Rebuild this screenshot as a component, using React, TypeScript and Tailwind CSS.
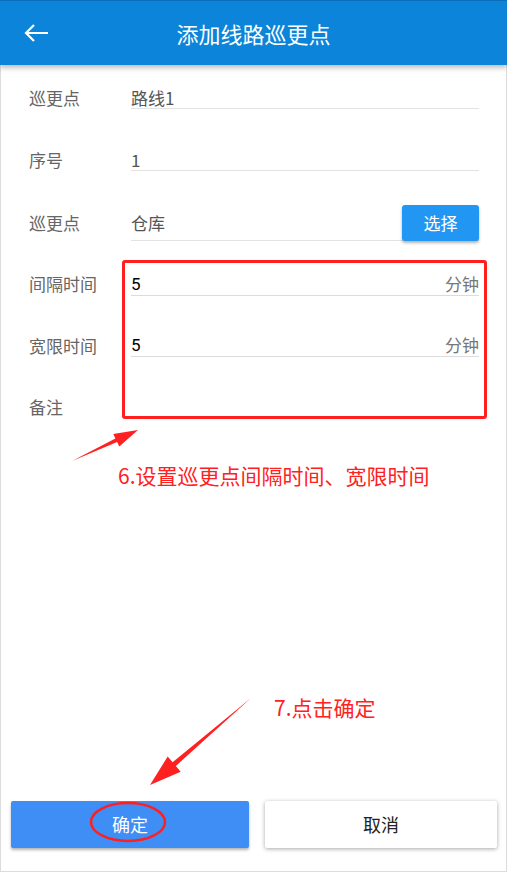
import React from 'react';

const font = { fontFamily: '"Noto Sans CJK SC", "Noto Sans", sans-serif' };

const Row: React.FC<{ label: string; mt: string; children: React.ReactNode }> = ({ label, mt, children }) => (
  <div className={`flex items-center h-fit pl-[28px] pr-[27px] ${mt}`}>
    <div className="w-[102px] text-[17px] leading-[20px] text-[#666]">{label}</div>
    <div className="flex-1">{children}</div>
  </div>
);

const App: React.FC = () => {
  return (
    <div className="relative w-[507px] h-[872px] bg-white flex flex-col overflow-hidden" style={font}>
      {/* Header */}
      <div className="relative z-10 h-[65px] shrink-0 bg-[#0b84d9] border-t border-[#0a6fb8] flex items-center shadow-[0_3px_5px_rgba(0,0,0,0.25)]">
        <svg className="ml-[24px]" width="25" height="20" viewBox="0 0 25 20" fill="none" stroke="white" strokeWidth="2.2">
          <path d="M24 10H2M10 2L2 10l8 8" />
        </svg>
        <div className="absolute inset-x-0 text-center text-white text-[22px] leading-none">添加线路巡更点</div>
      </div>

      {/* Form */}
      <div className="flex-1 flex flex-col border-x border-b border-[#dcdcdc]">
        <Row label="巡更点" mt="mt-[22px]">
          <div className="h-[22px] leading-[22px] border-b border-[#e3e3e3] text-[17px] text-[#555]">路线1</div>
        </Row>
        <Row label="序号" mt="mt-[40px]">
          <div className="h-[22px] leading-[22px] border-b border-[#e3e3e3] text-[17px] text-[#555]">1</div>
        </Row>
        <Row label="巡更点" mt="mt-[34px]">
          <div className="h-[36px] flex items-center justify-between border-b border-[#e3e3e3]">
            <span className="text-[17px] leading-[22px] text-[#555]">仓库</span>
            <button className="h-[36px] w-[77px] rounded-[3px] bg-[#2196f3] text-white text-[17px] leading-[22px] shadow-[0_2px_3px_rgba(0,0,0,0.3)]">选择</button>
          </div>
        </Row>
        <Row label="间隔时间" mt="mt-[31px]">
          <div className="h-[24px] flex items-center justify-between border-b border-[#dcdcdc]">
            <span className="text-[17px] leading-[22px] text-black" style={{ fontFamily: 'Roboto, sans-serif' }}>5</span>
            <span className="text-[17px] leading-[22px] text-[#777]">分钟</span>
          </div>
        </Row>
        <Row label="宽限时间" mt="mt-[38px]">
          <div className="h-[23px] flex items-center justify-between border-b border-[#dcdcdc]">
            <span className="text-[17px] leading-[22px] text-black" style={{ fontFamily: 'Roboto, sans-serif' }}>5</span>
            <span className="text-[17px] leading-[22px] text-[#777]">分钟</span>
          </div>
        </Row>
        <Row label="备注" mt="mt-[39px]">
          <div className="h-[22px] border-b border-[#e8e8e8]" />
        </Row>

        <div className="mt-auto mb-[23px] flex gap-[16px] pl-[10px] pr-[9px]">
          <button className="w-[238px] h-[47px] rounded-[2px] bg-[#3f8ef6] text-white text-[18px] shadow-[0_2px_3px_rgba(0,0,0,0.3)]">确定</button>
          <button className="flex-1 h-[47px] rounded-[2px] bg-white text-[#222] text-[18px] shadow-[0_1px_4px_rgba(0,0,0,0.35)]">取消</button>
        </div>
      </div>

      {/* Annotations */}
      <div className="absolute left-[122px] top-[260px] w-[365px] h-[159px] border-[3px] border-[#ff1f1f] rounded-[3px]" />
      <div className="absolute left-[118px] top-[461px] text-[21px] leading-[28px] text-[#ff2121]">6.设置巡更点间隔时间、宽限时间</div>
      <div className="absolute left-[274px] top-[693px] text-[21px] leading-[28px] text-[#ff2121]">7.点击确定</div>
      <svg className="absolute left-0 top-0 pointer-events-none" width="507" height="872">
        <polygon fill="#ff2121" points="72,461 117.1,442 119.3,446.5 138,430 113.3,433.9 115.4,438.4" />
        <polygon fill="#ff2121" points="251,698 175.8,766 180.7,771.7 150,785 167.7,756.5 172.6,762.2" />
        <ellipse cx="128" cy="822" rx="37" ry="19" fill="none" stroke="#ff1f1f" strokeWidth="2.5" />
      </svg>
    </div>
  );
};

export default App;
